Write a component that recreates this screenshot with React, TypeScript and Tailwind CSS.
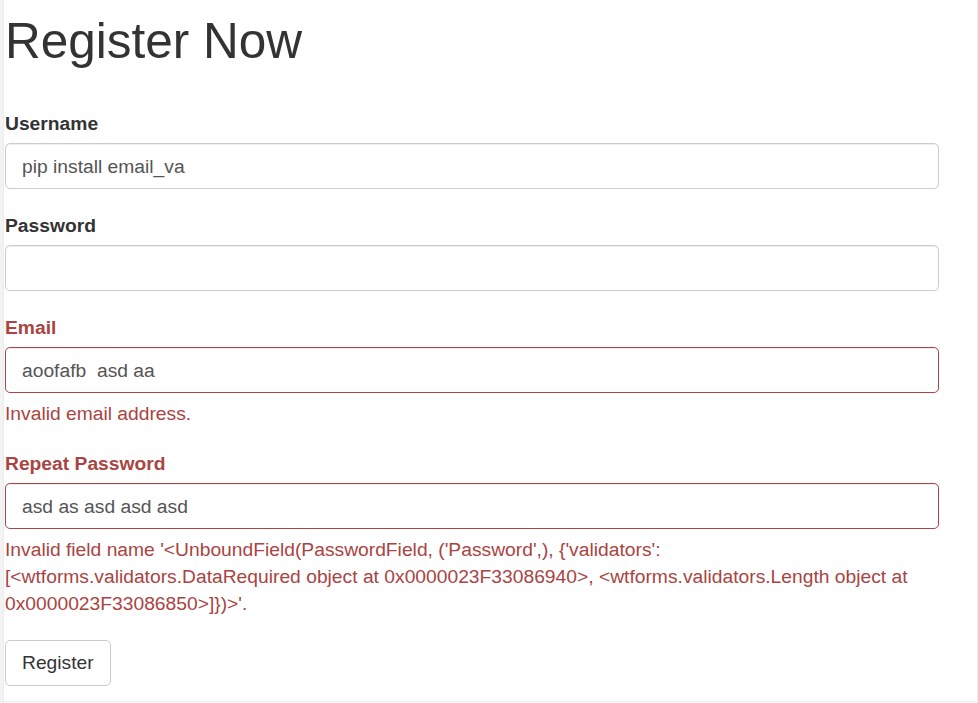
import React from 'react'

type Field = {
  label: string
  value: string
  type?: string
  error?: string
}

const fields: Field[] = [
  { label: 'Username', value: 'pip install email_va' },
  { label: 'Password', value: '', type: 'password' },
  { label: 'Email', value: 'aoofafb  asd aa', error: 'Invalid email address.' },
  {
    label: 'Repeat Password',
    value: 'asd as asd asd asd',
    error:
      "Invalid field name '<UnboundField(PasswordField, ('Password',), {'validators': [<wtforms.validators.DataRequired object at 0x0000023F33086940>, <wtforms.validators.Length object at 0x0000023F33086850>]})>'.",
  },
]

export default function App() {
  return (
    <div
      className="w-[978px] h-[703px] bg-white flex overflow-hidden text-[#333]"
      style={{ fontFamily: '"Liberation Sans", Arial, Helvetica, sans-serif' }}
    >
      {/* left gutter strip */}
      <div className="w-[4px] shrink-0 bg-[#f3f3f3] border-r border-[#ececec]" />

      <div className="flex-1 flex flex-col border-r border-[#ededed]">
        <div className="h-[701px] w-[935px] pl-[1px]">
          <h1 className="mt-[14px] mb-[42px] text-[49.5px] leading-[54px] font-normal">Register Now</h1>

          <form className="flex flex-col" onSubmit={(e) => e.preventDefault()}>
            {fields.map((f) => {
              const hasError = !!f.error
              return (
                <div key={f.label} className="mb-[23px] flex flex-col">
                  <label
                    className={`block mb-[6px] text-[19.25px] leading-[27px] font-bold ${
                      hasError ? 'text-[#a94442]' : 'text-[#333]'
                    }`}
                  >
                    {f.label}
                  </label>
                  <input
                    type={f.type ?? 'text'}
                    readOnly
                    defaultValue={f.value}
                    className={`block w-full h-[46px] px-[16px] pt-[1px] rounded-[5px] border bg-white text-[19.25px] text-[#555] outline-none shadow-[inset_0_1px_1px_rgba(0,0,0,0.075)] ${
                      hasError ? 'border-[#a94442]' : 'border-[#ccc]'
                    }`}
                  />
                  {f.error && (
                    <p className="mt-[7px] text-[19.25px] leading-[27px] text-[#a94442] break-words">{f.error}</p>
                  )}
                </div>
              )
            })}

            <div>
              <button
                type="submit"
                className="h-[46px] px-[16px] rounded-[5px] border border-[#ccc] bg-white text-[19.25px] text-[#333]"
              >
                Register
              </button>
            </div>
          </form>
        </div>
        <div className="h-[1px] bg-[#ededed]" />
      </div>
    </div>
  )
}
